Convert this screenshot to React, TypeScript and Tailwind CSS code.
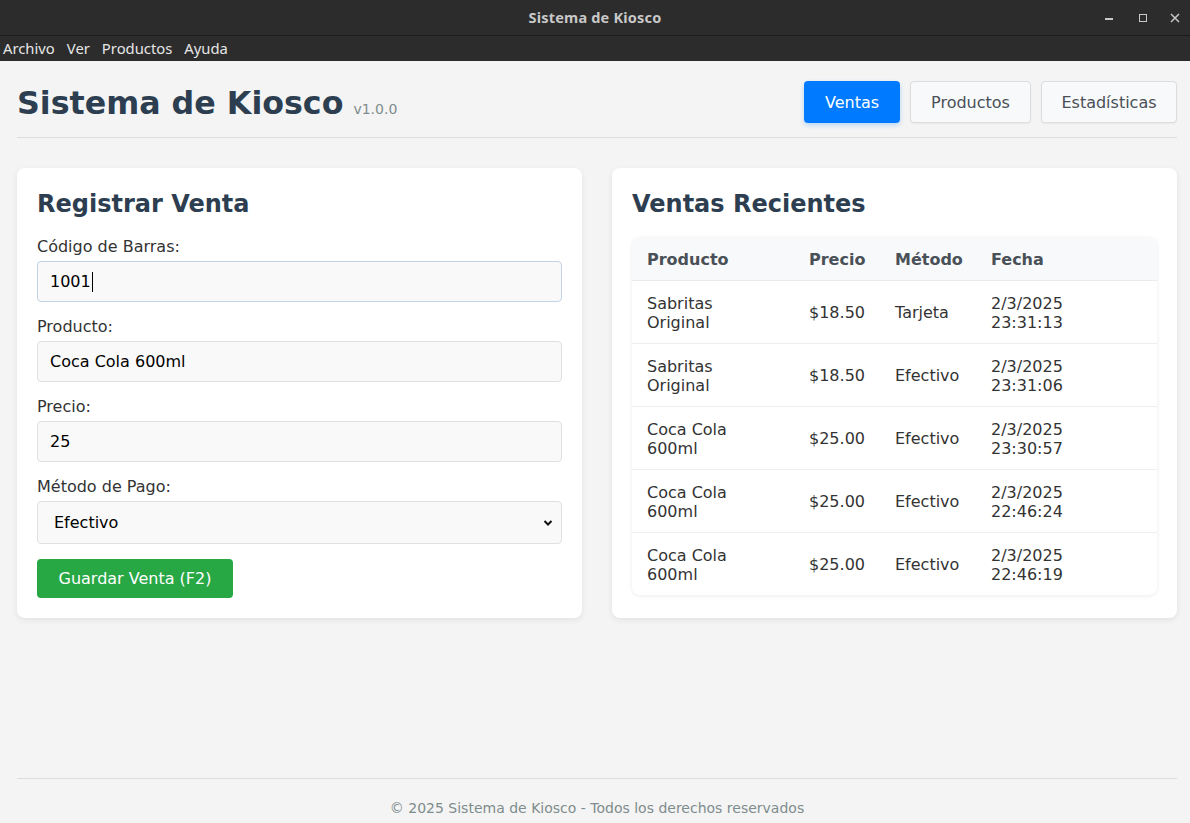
import React from "react";

const rows = [
  ["Sabritas Original", "$18.50", "Tarjeta", "2/3/2025 23:31:13"],
  ["Sabritas Original", "$18.50", "Efectivo", "2/3/2025 23:31:06"],
  ["Coca Cola 600ml", "$25.00", "Efectivo", "2/3/2025 23:30:57"],
  ["Coca Cola 600ml", "$25.00", "Efectivo", "2/3/2025 22:46:24"],
  ["Coca Cola 600ml", "$25.00", "Efectivo", "2/3/2025 22:46:19"],
];

function splitLast(s: string): [string, string] {
  const i = s.lastIndexOf(" ");
  return [s.slice(0, i), s.slice(i + 1)];
}

export default function App() {
  return (
    <div className="w-[1190px] h-[823px] flex flex-col bg-[#f4f4f4] overflow-hidden" style={{ fontFamily: '"DejaVu Sans", sans-serif' }}>
      {/* Title bar */}
      <div className="h-[36px] bg-[#2c2c2c] border-b border-[#1c1c1c] flex items-center relative shrink-0" style={{ fontFamily: '"Noto Sans", sans-serif' }}>
        <div className="flex-1 text-center text-[14.5px] font-bold text-[#c8c8c8] tracking-[0.2px]">Sistema de Kiosco</div>
        <div className="absolute right-0 top-0 h-[35px] flex items-center">
          <div className="w-[34px] flex justify-center"><div className="w-[8px] h-[1.5px] bg-[#c8c8c8] mt-[3px]" /></div>
          <div className="w-[34px] flex justify-center"><div className="w-[8px] h-[8px] border border-[#c8c8c8]" /></div>
          <div className="w-[30px] flex justify-center">
            <svg width="10" height="10" viewBox="0 0 10 10"><path d="M1 1L9 9M9 1L1 9" stroke="#c8c8c8" strokeWidth="1.5" /></svg>
          </div>
        </div>
      </div>
      {/* Menu bar */}
      <div className="h-[25px] bg-[#2c2c2c] flex items-center gap-[12px] pl-[3px] text-[14.8px] text-[#e6e6e6] shrink-0" style={{ fontFamily: '"Noto Sans", sans-serif' }}>
        <span>Archivo</span>
        <span>Ver</span>
        <span>Productos</span>
        <span>Ayuda</span>
      </div>

      <div className="flex-1 flex flex-col px-[17px] w-[1194px]">
        {/* Header */}
        <div className="flex items-center justify-between pt-[20px] pb-[14px] border-b border-[#dddddd] w-[1160px]">
          <div className="flex items-baseline gap-[10px]">
            <h1 className="text-[31.7px] font-bold text-[#2c3e50] leading-[40px] mt-[1px]">Sistema de Kiosco</h1>
            <span className="text-[14px] text-[#7f8c8d]">v1.0.0</span>
          </div>
          <div className="flex gap-[10px]">
            <button className="h-[42px] w-[96px] pt-[1px] rounded-[4px] bg-[#007bff] text-white text-[16px] shadow-[0_2px_5px_rgba(0,123,255,0.25)]">Ventas</button>
            <button className="h-[42px] w-[121px] pt-[1px] rounded-[4px] bg-[#f8f9fa] border border-[#dddddd] text-[#495057] text-[16px] shadow-[0_1px_2px_rgba(0,0,0,0.05)]">Productos</button>
            <button className="h-[42px] w-[136px] pt-[1px] rounded-[4px] bg-[#f8f9fa] border border-[#dddddd] text-[#495057] text-[16px] shadow-[0_1px_2px_rgba(0,0,0,0.05)]">Estadísticas</button>
          </div>
        </div>

        {/* Main */}
        <div className="flex gap-[30px] mt-[30px] w-[1160px] items-start">
          {/* Left card */}
          <div className="w-[565px] h-[450px] bg-white rounded-[8px] shadow-[0_2px_6px_rgba(0,0,0,0.08)] p-[20px]">
            <h2 className="text-[24px] font-bold text-[#2c3e50] leading-[29px] mt-[2px] mb-[18px]">Registrar Venta</h2>
            <div className="flex flex-col">
              <label className="text-[16px] text-[#333333] leading-[19px] mb-[5px]">Código de Barras:</label>
              <div className="h-[41px] rounded-[4px] border border-[#c3d3e6] bg-[#f9f9f9] flex items-center px-[12px] text-[16px] text-black mb-[15px]">
                1001<span className="inline-block w-[1px] h-[20px] bg-black ml-[1px]" />
              </div>
              <label className="text-[16px] text-[#333333] leading-[19px] mb-[5px]">Producto:</label>
              <div className="h-[41px] rounded-[4px] border border-[#e0e0e0] bg-[#f9f9f9] flex items-center px-[12px] text-[16px] text-black mb-[15px]">Coca Cola 600ml</div>
              <label className="text-[16px] text-[#333333] leading-[19px] mb-[5px]">Precio:</label>
              <div className="h-[41px] rounded-[4px] border border-[#e0e0e0] bg-[#f9f9f9] flex items-center px-[12px] text-[16px] text-black mb-[15px]">25</div>
              <label className="text-[16px] text-[#333333] leading-[19px] mb-[5px]">Método de Pago:</label>
              <div className="h-[43px] rounded-[4px] border border-[#e0e0e0] bg-[#f9f9f9] flex items-center justify-between pl-[16px] pr-[8px] text-[16px] text-black mb-[15px]">
                <span>Efectivo</span>
                <svg width="10" height="8" viewBox="0 0 10 8"><path d="M1.5 2L5 5.5L8.5 2" stroke="#111" strokeWidth="2" fill="none" /></svg>
              </div>
              <div>
                <button className="h-[39px] w-[196px] rounded-[4px] bg-[#28a745] text-white text-[16px]">Guardar Venta (F2)</button>
              </div>
            </div>
          </div>

          {/* Right card */}
          <div className="w-[565px] h-[450px] bg-white rounded-[8px] shadow-[0_2px_6px_rgba(0,0,0,0.08)] p-[20px]">
            <h2 className="text-[24px] font-bold text-[#2c3e50] leading-[29px] mt-[2px] mb-[18px]">Ventas Recientes</h2>
            <div className="rounded-[8px] overflow-hidden shadow-[0_1px_4px_rgba(0,0,0,0.08)]">
              <table className="w-[525px] border-collapse text-[16px] text-left" style={{ tableLayout: "fixed" }}>
                <colgroup>
                  <col className="w-[162px]" />
                  <col className="w-[86px]" />
                  <col className="w-[96px]" />
                  <col className="w-[181px]" />
                </colgroup>
                <thead>
                  <tr className="bg-[#f8f9fa] border-b border-[#e9ecef]">
                    <th className="h-[43px] px-[15px] pt-[3px] pb-0 font-bold text-[#495057] leading-[19px]">Producto</th>
                    <th className="px-[15px] pt-[3px] font-bold text-[#495057]">Precio</th>
                    <th className="px-[15px] pt-[3px] font-bold text-[#495057]">Método</th>
                    <th className="px-[15px] pt-[3px] font-bold text-[#495057]">Fecha</th>
                  </tr>
                </thead>
                <tbody>
                  {rows.map((r, i) => {
                    const [a, b] = splitLast(r[0]);
                    const [d, t] = r[3].split(" ");
                    return (
                      <tr key={i} className={i < rows.length - 1 ? "border-b border-[#eeeeee]" : ""}>
                        <td className="h-[63px] px-[15px] pt-[2px] text-[#333333] leading-[19px]">{a}<br />{b}</td>
                        <td className="px-[15px] pt-[2px] text-[#333333]">{r[1]}</td>
                        <td className="px-[15px] pt-[2px] text-[#333333]">{r[2]}</td>
                        <td className="px-[15px] pt-[2px] text-[#333333] leading-[19px]">{d}<br />{t}</td>
                      </tr>
                    );
                  })}
                </tbody>
              </table>
            </div>
          </div>
        </div>

        <div className="flex-1" />
        {/* Footer */}
        <div className="w-[1160px] border-t border-[#dddddd] h-[45px] flex items-end justify-center pb-[4px] text-[14px] text-[#7f8c8d]">
          © 2025 Sistema de Kiosco - Todos los derechos reservados
        </div>
      </div>
    </div>
  );
}
